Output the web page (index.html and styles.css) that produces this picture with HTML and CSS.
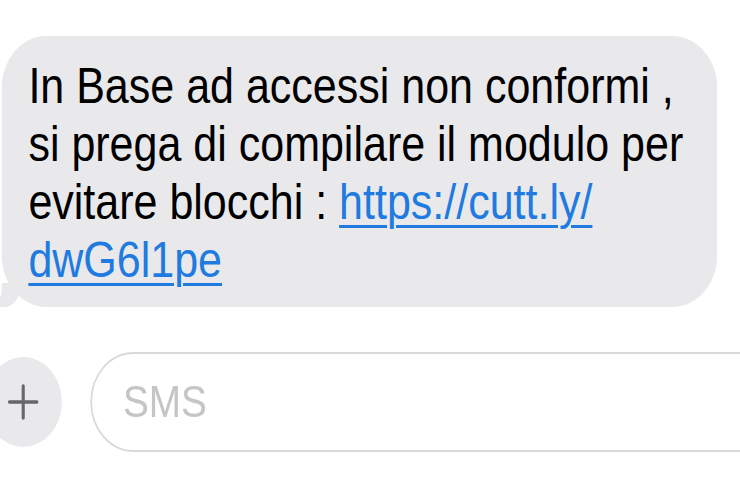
FILE: index.html
```html
<!DOCTYPE html>
<html lang="it">

<head>
    <meta charset="UTF-8" />
    <title>Messaggi</title>
    <link rel="stylesheet" href="styles.css">
</head>

<body>
    <div class="screen">
        <div class="thread">
            <div class="bubble">
                <p class="msg">In Base ad accessi non conformi ,<br>si prega di compilare il modulo per<br>evitare blocchi : <a href="#">https://cutt.ly/<br>dwG6l1pe</a></p>
            </div>
        </div>

        <div class="composer">
            <div class="plus">
                <svg width="36" height="36" viewBox="0 0 36 36">
                    <path d="M18 2 V34 M2 18 H34" stroke="#66666b" stroke-width="3.6" stroke-linecap="round" fill="none" />
                </svg>
            </div>
            <div class="field">
                <span class="placeholder">SMS</span>
            </div>
        </div>
    </div>
</body>

</html>
```

FILE: styles.css
```css
/* whole screen is a bit squeezed horizontally, like the photo */
body {
    margin: 0;
    background: #fff;
    overflow: hidden;
    font-family: 'Liberation Sans', Arial, sans-serif;
}

.screen {
    width: 860px;
    padding-top: 36px;
    transform: scaleX(0.86);
    transform-origin: 0 0;
}

.thread {
    padding: 0 26px 0 2px;
}

.bubble {
    position: relative;
    background: #e9e9eb;
    border-radius: 52px;
    padding: 21px 30px 18px 31px;
}

/* little tail at the bottom left */
.bubble::before {
    content: "";
    position: absolute;
    left: -8px;
    bottom: 0;
    width: 30px;
    height: 24px;
    background: #e9e9eb;
    border-bottom-right-radius: 18px 22px;
}

.bubble::after {
    content: "";
    position: absolute;
    left: -30px;
    bottom: -1px;
    width: 30px;
    height: 26px;
    background: #fff;
    border-bottom-right-radius: 16px 20px;
}

.msg {
    margin: 0;
    font-size: 50px;
    line-height: 58px;
    color: #000;
    white-space: nowrap;
}

.msg a {
    color: #1f7be0;
    text-decoration: underline;
    text-decoration-thickness: 3px;
    text-underline-offset: 6px;
}

.composer {
    display: flex;
    align-items: center;
    gap: 33px;
    margin-top: 45px;
    margin-left: -18px;
}

.plus {
    flex: none;
    width: 90px;
    height: 90px;
    border-radius: 50%;
    background: #e9e9eb;
    display: flex;
    align-items: center;
    justify-content: center;
}

.field {
    flex: none;
    width: 900px;
    height: 96px;
    border: 2px solid #d9d9db;
    border-radius: 50px;
    display: flex;
    align-items: center;
    padding-left: 36px;
}

.placeholder {
    font-size: 45px;
    color: #c5c5c8;
}
```
